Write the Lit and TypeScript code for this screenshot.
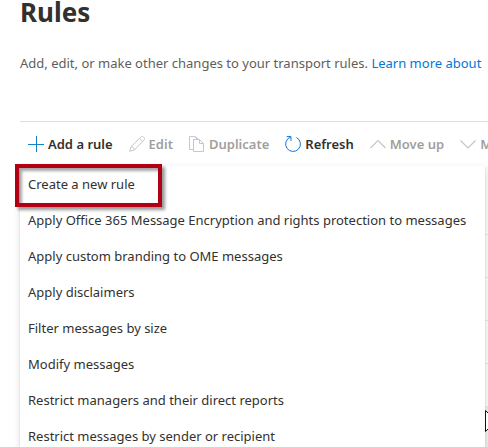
import { LitElement, html, css, svg } from "lit";
import { customElement, state } from "lit/decorators.js";
import { classMap } from "lit/directives/class-map.js";

const icons = {
  add: svg`<path d="M8.5 0v16M0 8.5h16" stroke="#1583c9" />`,
  edit: svg`<path d="M.7 15.300l1.400-4.700L12 .9c.7-.6 1.600-.6 2.300 0l.8.8c.6.7.6 1.600 0 2.300L5.400 13.900zM2.200 10.600c1.600.2 2.800 1.400 3.200 3.200M10.500 2.400l3.100 3.100" />`,
  duplicate: svg`<path d="M4.500 13.500h-4V.5h5l3 3M5.500 .5h1l3 3" stroke="#c3c9dd" /><path d="M4.500 3.500h6l4 4v8h-10zM10.500 3.500v4h4" />`,
  refresh: svg`<path d="M11.500 1.500A7.400 7.400 0 1 1 5.500 1.100M1.700 .6h4.300v4.300" stroke="#0f78d4" />`,
  up: svg`<path d="M.5 12L8 4.500l7.500 7.500" stroke-width="1.200" />`,
  down: svg`<path d="M.5 4.500L8 12l7.500-7.500" stroke-width="1.200" />`,
};

interface Command {
  label: string;
  icon: keyof typeof icons;
  enabled: boolean;
}

const commands: Command[] = [
  { label: "Add a rule", icon: "add", enabled: true },
  { label: "Edit", icon: "edit", enabled: false },
  { label: "Duplicate", icon: "duplicate", enabled: false },
  { label: "Refresh", icon: "refresh", enabled: true },
  { label: "Move up", icon: "up", enabled: false },
  { label: "Move down", icon: "down", enabled: false },
];

const templates = [
  "Create a new rule",
  "Apply Office 365 Message Encryption and rights protection to messages",
  "Apply custom branding to OME messages",
  "Apply disclaimers",
  "Filter messages by size",
  "Modify messages",
  "Restrict managers and their direct reports",
  "Restrict messages by sender or recipient",
];

@customElement("app-root")
export class AppRoot extends LitElement {
  @state() private open = true;

  static styles = css`
    :host {
      display: block;
      position: relative;
      height: 100vh;
      overflow: hidden;
      background: #fff;
      color: #323130;
      font: 13px/20px "Noto Sans", "Open Sans", sans-serif;
    }
    .page {
      padding-left: 20px;
    }
    h1 {
      margin: 0;
      padding-bottom: 29px;
      font-size: 26px;
      line-height: 24px;
      font-weight: 700;
    }
    .intro {
      margin: 0;
      padding-bottom: 48px;
      color: #605e5c;
      white-space: nowrap;
    }
    a {
      color: #0078d4;
      text-decoration: none;
    }
    .toolbar {
      display: flex;
      height: 44px;
      border-top: 1px solid #dcdcdc;
    }
    button {
      font: inherit;
      color: inherit;
      background: none;
      border: 0;
      margin: 0;
      cursor: pointer;
      white-space: nowrap;
    }
    .command {
      display: flex;
      flex: none;
      align-items: center;
      gap: 4px;
      padding: 0 8px;
      font-weight: 600;
    }
    .command:disabled {
      color: #a19f9d;
      cursor: default;
    }
    .command svg {
      width: 16px;
      height: 16px;
      fill: none;
      stroke: #c8c6c4;
    }
    .content {
      position: relative;
    }
    .row {
      height: 42px;
      border-bottom: 1px solid #e6e6e6;
      background: #fafafa;
    }
    .row.head {
      height: 68px;
    }
    .row.hovered {
      background: #ededed;
    }
    .menu {
      position: absolute;
      top: 0;
      left: 0;
      right: 3px;
      margin: 0;
      padding: 0;
      list-style: none;
      background: #fff;
      box-shadow: 0 3px 7px rgba(0, 0, 0, 0.13), 0 1px 2px rgba(0, 0, 0, 0.1);
    }
    .item {
      display: block;
      position: relative;
      width: 100%;
      height: 36px;
      padding: 0 8px;
      text-align: left;
    }
    .marked::after {
      content: "";
      position: absolute;
      inset: -2px auto -5px -5px;
      width: 139px;
      border: 4px solid #b10014;
      box-shadow: 3px 3px 3px rgba(0, 0, 0, 0.4),
        inset 3px 3px 3px rgba(0, 0, 0, 0.35);
    }
    .pointer {
      position: absolute;
      right: -9px;
      top: 410px;
      width: 12px;
      height: 25px;
      pointer-events: none;
    }
  `;

  private run(c: Command) {
    if (c.icon === "add") this.open = !this.open;
  }

  render() {
    return html`
      <main class="page">
        <h1>Rules</h1>
        <p class="intro">
          Add, edit, or make other changes to your transport rules.
          <a href="#learn">Learn more about</a>
        </p>
        <div class="toolbar" role="toolbar">
          ${commands.map(
            (c) => html`<button
              class="command"
              ?disabled=${!c.enabled}
              @click=${() => this.run(c)}
            >
              <svg viewBox="0 0 16 16" aria-hidden="true">${icons[c.icon]}</svg
              >${c.label}
            </button>`
          )}
        </div>
        <div class="content">
          ${[0, 1, 2, 3, 4, 5].map(
            (i) => html`<div
              class=${classMap({ row: true, head: i === 0, hovered: i === 5 })}
            ></div>`
          )}
          ${this.open
            ? html`<ul class="menu">
                ${templates.map(
                  (t, i) => html`<li>
                    <button class=${classMap({ item: true, marked: i === 0 })}>
                      ${t}
                    </button>
                  </li>`
                )}
              </ul>`
            : ""}
        </div>
      </main>
      <svg class="pointer" viewBox="0 0 12 25" aria-hidden="true">
        <path d="M.5 .5v21l5-5 3 7 3-1-3-7h7z" fill="#fff" stroke="#111" />
      </svg>
    `;
  }
}
